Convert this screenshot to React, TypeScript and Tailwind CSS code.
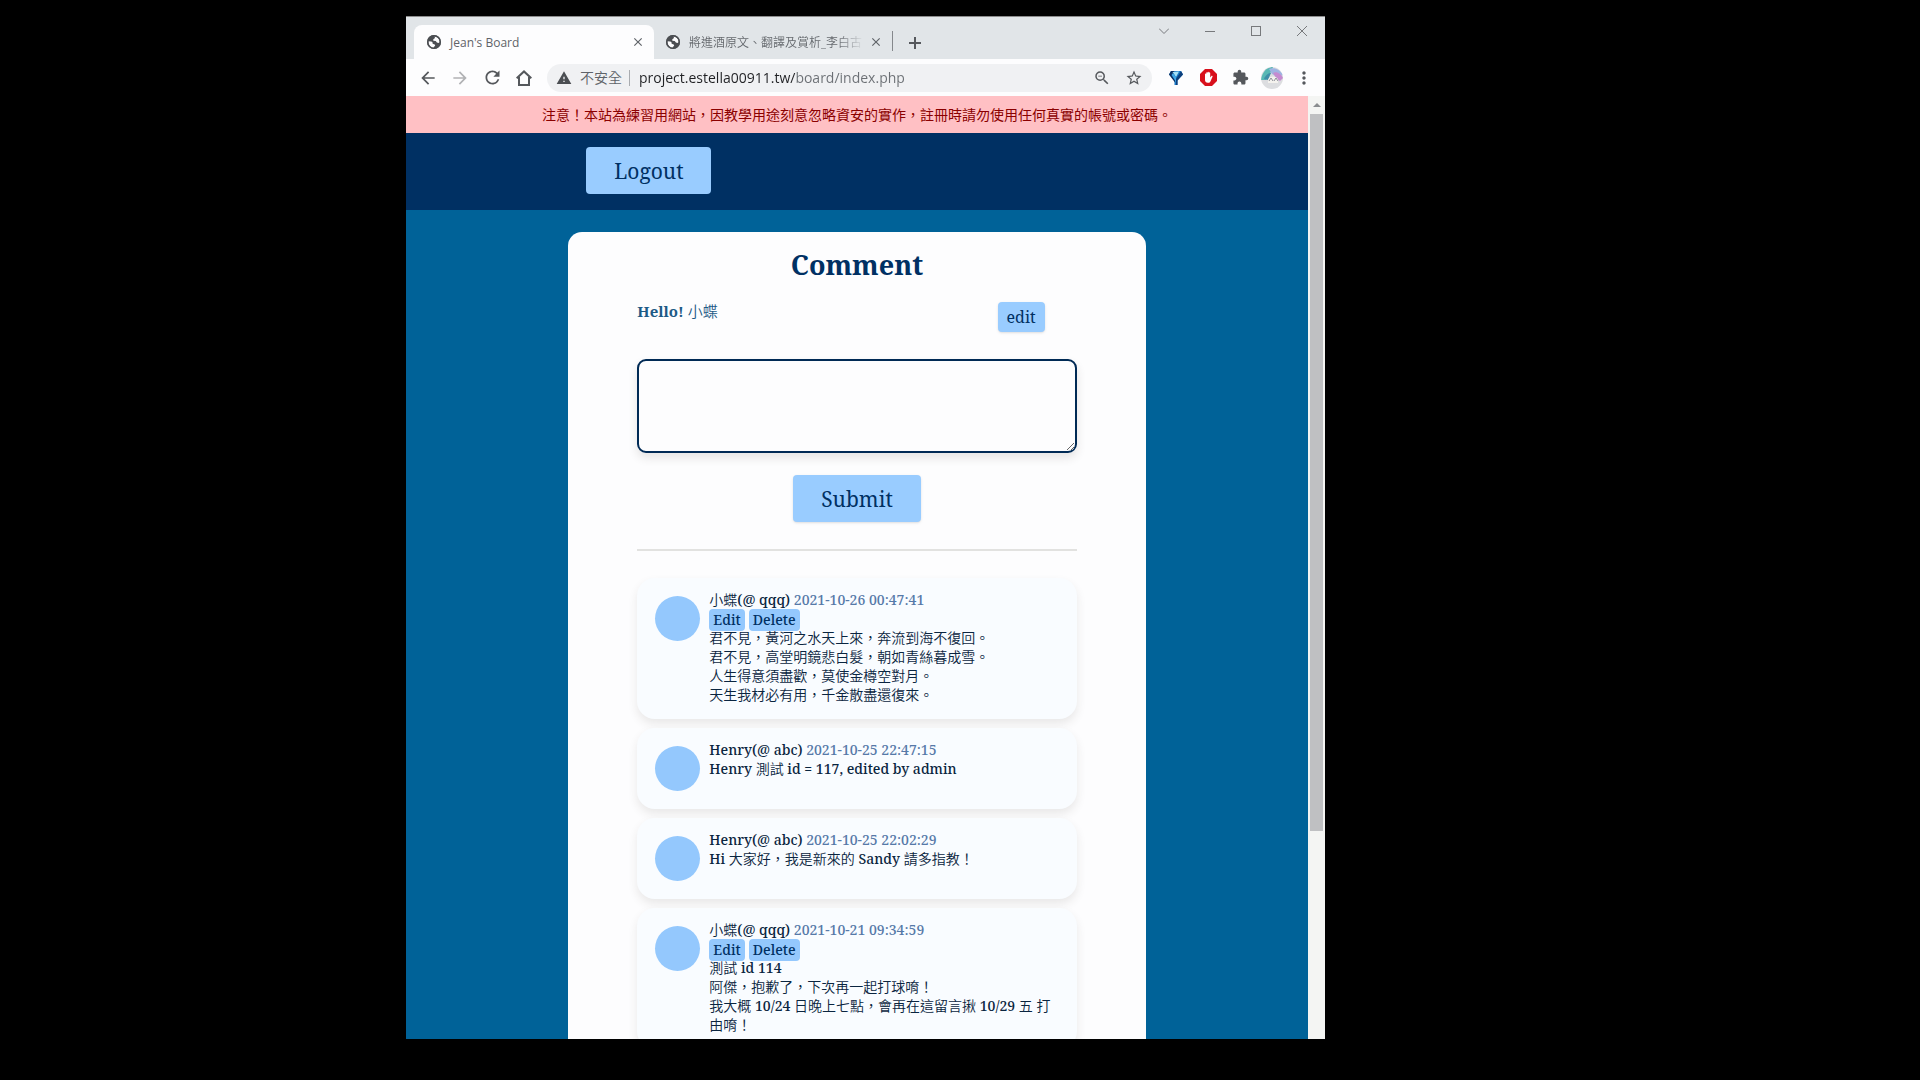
import type { ReactNode } from 'react';
import {
  MdArrowBack,
  MdArrowForward,
  MdClose,
  MdExtension,
  MdMoreVert,
  MdRefresh,
  MdStarBorder,
  MdWarning,
  MdZoomOut,
} from 'react-icons/md';

const HAN = /([\u3000-\u9fff\uff00-\uffef]+)/;

type Comment = {
  name: string;
  account: string;
  time: string;
  own: boolean;
  lines: string[];
};

const comments: Comment[] = [
  {
    name: '小蝶',
    account: 'qqq',
    time: '2021-10-26 00:47:41',
    own: true,
    lines: [
      '君不見，黃河之水天上來，奔流到海不復回。',
      '君不見，高堂明鏡悲白髮，朝如青絲暮成雪。',
      '人生得意須盡歡，莫使金樽空對月。',
      '天生我材必有用，千金散盡還復來。',
    ],
  },
  {
    name: 'Henry',
    account: 'abc',
    time: '2021-10-25 22:47:15',
    own: false,
    lines: ['Henry 測試 id = 117, edited by admin'],
  },
  {
    name: 'Henry',
    account: 'abc',
    time: '2021-10-25 22:02:29',
    own: false,
    lines: ['Hi 大家好，我是新來的 Sandy 請多指教！'],
  },
  {
    name: '小蝶',
    account: 'qqq',
    time: '2021-10-21 09:34:59',
    own: true,
    lines: [
      '測試 id 114',
      '阿傑，抱歉了，下次再一起打球唷！',
      '我大概 10/24 日晚上七點，會再在這留言揪 10/29 五 打由唷！',
    ],
  },
];

/** Sets runs of Chinese in a lighter weight than the Latin text around them. */
function Mixed({ text }: { text: string }) {
  return (
    <>
      {text.split(HAN).map((part, i) =>
        i % 2 === 1 ? (
          <span key={i} className="font-[350]">
            {part}
          </span>
        ) : (
          part
        ),
      )}
    </>
  );
}

function Globe() {
  return (
    <svg viewBox="0 0 16 16" className="size-4 shrink-0">
      <circle cx="8" cy="8" r="7" fill="#4b4e52" />
      <path
        d="M2.500 7.200 5 7.500c1.500.2 1.800 1.300 1.600 2.200l2 .8c.8.4.6 1.300.1 1.700l-1 .8v1.100C4.500 13.600 2.200 11 2.500 7.200z"
        fill="#fdfdfe"
      />
      <path
        d="M8.500 2.300 9 4 7.300 5.300v1.500l2.400.2 1.200 1.600 1.600.5 1.100-.9C13.700 5 11.600 2.700 8.500 2.300z"
        fill="#fdfdfe"
      />
      <circle cx="8" cy="8" r="6.300" fill="none" stroke="#4b4e52" strokeWidth="1.400" />
    </svg>
  );
}

function IconButton({ label, className = '', children }: { label: string; className?: string; children: ReactNode }) {
  return (
    <button
      type="button"
      aria-label={label}
      className={`flex h-8 w-8 shrink-0 items-center justify-center text-[#55585c] ${className}`}
    >
      {children}
    </button>
  );
}

function TabStrip() {
  return (
    <div className="flex h-[43px] shrink-0 items-end border-t border-[#8c8c8c] bg-[#e1e5e8] pl-2 font-['Open_Sans','Noto_Sans_CJK_TC',sans-serif] text-xs text-[#5f6368]">
      <div className="flex h-[34px] w-60 items-center rounded-t-lg bg-[#fdfdfe] pr-2 pl-3">
        <Globe />
        <button type="button" className="ml-2 flex-1 pt-px text-left">
          Jean's Board
        </button>
        <button type="button" aria-label="Close tab" className="flex size-4 items-center justify-center">
          <MdClose className="size-[14px]" />
        </button>
      </div>
      <div className="flex h-[34px] w-[238px] items-center pr-2 pl-[11px]">
        <Globe />
        <button
          type="button"
          className="ml-2 flex-1 overflow-hidden bg-linear-to-r from-[#5f6368] from-85% to-transparent bg-clip-text pt-px text-left font-[350] whitespace-nowrap text-transparent"
        >
          將進酒原文、翻譯及賞析_李白古
        </button>
        <button type="button" aria-label="Close tab" className="ml-1 flex size-4 items-center justify-center">
          <MdClose className="size-[14px]" />
        </button>
      </div>
      <div className="mb-2 h-5 w-px bg-[#85888c]" />
      <IconButton label="New tab" className="ml-[6px]">
        <svg viewBox="0 0 12 12" className="size-3" stroke="currentColor" strokeWidth="2">
          <path d="M6 0v12M0 6h12" />
        </svg>
      </IconButton>
      <div className="ml-auto flex h-full text-[#77797c]">
        <button type="button" aria-label="Search tabs" className="flex h-[28px] w-[46px] items-center justify-center">
          <svg viewBox="0 0 10 6" className="h-[6px] w-[10px]" fill="none" stroke="currentColor">
            <path d="M0 .5 5 5.5 10 .5" />
          </svg>
        </button>
        <button type="button" aria-label="Minimize" className="flex h-[28px] w-[46px] items-center justify-center">
          <span className="h-px w-[10px] bg-current" />
        </button>
        <button type="button" aria-label="Maximize" className="flex h-[28px] w-[46px] items-center justify-center">
          <span className="size-[10px] border border-current" />
        </button>
        <button type="button" aria-label="Close window" className="flex h-[28px] w-[46px] items-center justify-center">
          <svg viewBox="0 0 10 10" className="size-[10px]" stroke="currentColor">
            <path d="M0 0 10 10M10 0 0 10" />
          </svg>
        </button>
      </div>
    </div>
  );
}

function Toolbar() {
  return (
    <div className="flex h-[37px] shrink-0 items-center bg-[#fdfdfe] pr-[5px] pl-[6px] font-['Open_Sans','Noto_Sans_CJK_TC',sans-serif] text-sm">
      <IconButton label="Back">
        <MdArrowBack className="size-5" />
      </IconButton>
      <IconButton label="Forward" className="opacity-45">
        <MdArrowForward className="size-5" />
      </IconButton>
      <IconButton label="Reload">
        <MdRefresh className="size-[21px]" />
      </IconButton>
      <IconButton label="Home">
        <svg viewBox="0 0 16 16" className="size-4" fill="none" stroke="currentColor" strokeWidth="2">
          <path d="M.7 8.3 8 1.4l7.3 6.9M3 7v8h10V7" />
        </svg>
      </IconButton>
      <div className="ml-[7px] flex h-7 flex-1 items-center rounded-full bg-[#f0f1f3] pr-[2px] pl-[9px] text-[#5f6368]">
        <MdWarning className="size-4 shrink-0 text-[#4b4e52]" />
        <span className="ml-2 font-[350]">不安全</span>
        <span className="ml-[7px] h-4 w-px bg-[#a9acb0]" />
        <input
          aria-label="Address"
          defaultValue="project.estella00911.tw/board/index.php"
          className="ml-[9px] min-w-0 flex-1 bg-[linear-gradient(90deg,#202124_156px,#6b6f74_156px)] bg-clip-text text-transparent outline-none"
        />
        <IconButton label="Zoom">
          <MdZoomOut className="size-[18px]" />
        </IconButton>
        <IconButton label="Bookmark this page">
          <MdStarBorder className="size-[18px]" />
        </IconButton>
      </div>
      <IconButton label="Gem extension" className="ml-2">
        <svg viewBox="0 0 14 14" className="size-[14px]">
          <path d="M2 0h10l2 3.500-5.500 6V14h-3V9.500L0 3.500z" fill="#1878c4" />
          <path d="M2 0h3l1 6v5.500L0 3.500z" fill="#0b2f63" />
          <path d="M3.500 1 10 .5 7 6z" fill="#a5e0f5" />
          <path d="M4 2l3 4v5L2.500 4z" fill="#3ea6e6" />
          <path d="M12 0l2 3.500-5.500 6V14H7V8z" fill="#0e3f7c" />
        </svg>
      </IconButton>
      <IconButton label="Ad blocker">
        <svg viewBox="0 0 17 17" className="size-[17px]">
          <path d="M5 0h7l5 5v7l-5 5H5l-5-5V5z" fill="#d8101c" />
          <path
            d="M5 8.5V5.2c0-.9 1.2-.9 1.2 0V4c0-1 1.3-1 1.3 0v-.6c0-1 1.4-1 1.4 0V4c0-1 1.3-1 1.3 0v4.6l1-1.4c.6-.8 1.7-.2 1.3.6l-2 4.4c-.5 1-1.2 1.5-2.2 1.5H7.8C6 13.7 5 12.5 5 11z"
            fill="#fff"
          />
        </svg>
      </IconButton>
      <IconButton label="Extensions">
        <MdExtension className="size-[17px]" />
      </IconButton>
      <IconButton label="Profile">
        <svg viewBox="0 0 22 22" className="size-[22px]">
          <defs>
            <clipPath id="avatar">
              <circle cx="11" cy="11" r="11" />
            </clipPath>
          </defs>
          <g clipPath="url(#avatar)">
            <path d="M0 0h22v22H0z" fill="#dcdde0" />
            <path d="M0 13C1 5 6 0 12 0L9 7l-4 6z" fill="#58b8b4" />
            <path d="M8 2c5-2 11 0 14 6l-5 2-6-3z" fill="#9fb4e2" />
            <path d="M12 6c4-2 8 1 10 5l-3 3-4-3z" fill="#c58bd0" />
            <path d="M3 12c2-5 5-6 7-6l-3 7z" fill="#3e8fa8" />
            <path d="M7 13c1-4 7-5 10-1v4H7z" fill="#f4f2ee" />
            <path d="M8 14l2-3 2 3M13 14l2-3 2 3" fill="none" stroke="#8d8f98" />
          </g>
        </svg>
      </IconButton>
      <IconButton label="Menu">
        <MdMoreVert className="size-5" />
      </IconButton>
    </div>
  );
}

function Scrollbar() {
  return (
    <div className="flex w-[17px] shrink-0 flex-col items-center bg-[#f4f5f3]">
      <div className="flex h-[18px] shrink-0 items-center">
        <svg viewBox="0 0 8 4" className="h-1 w-2" fill="#8a8d90">
          <path d="M4 0l4 4H0z" />
        </svg>
      </div>
      <div className="h-[76%] w-[13px] bg-[#bfc0c2]" />
    </div>
  );
}

function CommentCard({ comment }: { comment: Comment }) {
  return (
    <li className="flex gap-[9px] rounded-[18px] bg-[#f9fcff] px-[18px] pt-3 pb-[15px] shadow-[0_5px_10px_rgba(60,50,40,0.1)]">
      <div className="mt-[6px] mb-[3px] size-[45px] shrink-0 rounded-full bg-[#94c8fd]" />
      <div className="min-w-0 flex-1 text-sm leading-[19px] font-medium text-[#0a2540]">
        <p>
          <Mixed text={`${comment.name}(@ ${comment.account})`} /> <time className="text-[#5679a8]">{comment.time}</time>
        </p>
        {comment.own && (
          <div className="flex h-[19px] items-center gap-1">
            <button type="button" className="mt-[2px] h-[22px] shrink-0 rounded bg-[#94c8fd] px-1 text-[#003063]">
              Edit
            </button>
            <button type="button" className="mt-[2px] h-[22px] shrink-0 rounded bg-[#94c8fd] px-1 text-[#003063]">
              Delete
            </button>
          </div>
        )}
        {comment.lines.map((line) => (
          <p key={line}>
            <Mixed text={line} />
          </p>
        ))}
      </div>
    </li>
  );
}

function Board() {
  return (
    <div className="min-w-0 flex-1 overflow-hidden bg-[#006298] font-['Noto_Serif','Noto_Sans_CJK_TC',serif]">
      <p className="bg-[#ffc0c4] pt-[9px] pb-2 text-center text-sm leading-5 text-[#8b0000]">
        注意！本站為練習用網站，因教學用途刻意忽略資安的實作，註冊時請勿使用任何真實的帳號或密碼。
      </p>
      <header className="bg-[#003063] pt-[14px] pb-4">
        <div className="mx-auto w-3/5">
          <button type="button" className="h-[47px] w-[125px] rounded bg-[#99ccff] pt-[2px] text-[21px] text-[#003063]">
            Logout
          </button>
        </div>
      </header>
      <main className="mx-auto mt-[22px] w-[64%] rounded-t-[14px] bg-[#fdfdfe] px-[69px] pt-[14px]">
        <h1 className="text-center text-[27px] leading-[38px] font-bold text-[#003063]">Comment</h1>
        <div className="mt-[18px] flex items-start justify-between pr-8">
          <p className="text-[15px] leading-[18px] font-bold text-[#1d5a86]">
            <Mixed text="Hello! 小蝶" />
          </p>
          <button type="button" className="h-[30px] w-[47px] rounded bg-[#99ccff] text-base text-[#003063] shadow-sm">
            edit
          </button>
        </div>
        <form className="mt-[27px]">
          <textarea
            aria-label="Comment"
            className="block h-[94px] w-full rounded-[9px] border-2 border-[#002a55] bg-transparent p-2 shadow-[0_5px_10px_rgba(60,50,40,0.12)]"
          />
          <button
            type="button"
            className="mx-auto mt-[22px] block h-[47px] w-[128px] rounded bg-[#99ccff] pt-[2px] text-[21px] text-[#003063] shadow-sm"
          >
            Submit
          </button>
        </form>
        <hr className="mt-[27px] border-t-2 border-[#e2e2e0]" />
        <ul className="mt-[27px] flex flex-col gap-[9px] pb-8">
          {comments.map((comment) => (
            <CommentCard key={comment.time} comment={comment} />
          ))}
        </ul>
      </main>
    </div>
  );
}

export default function App() {
  return (
    <div lang="zh-TW" className="grid h-screen grid-cols-[406fr_919fr_595fr] bg-black pt-4 pb-[41px]">
      <div className="col-start-2 flex min-h-0 flex-col overflow-hidden">
        <TabStrip />
        <Toolbar />
        <div className="flex min-h-0 flex-1">
          <Board />
          <Scrollbar />
        </div>
      </div>
    </div>
  );
}
